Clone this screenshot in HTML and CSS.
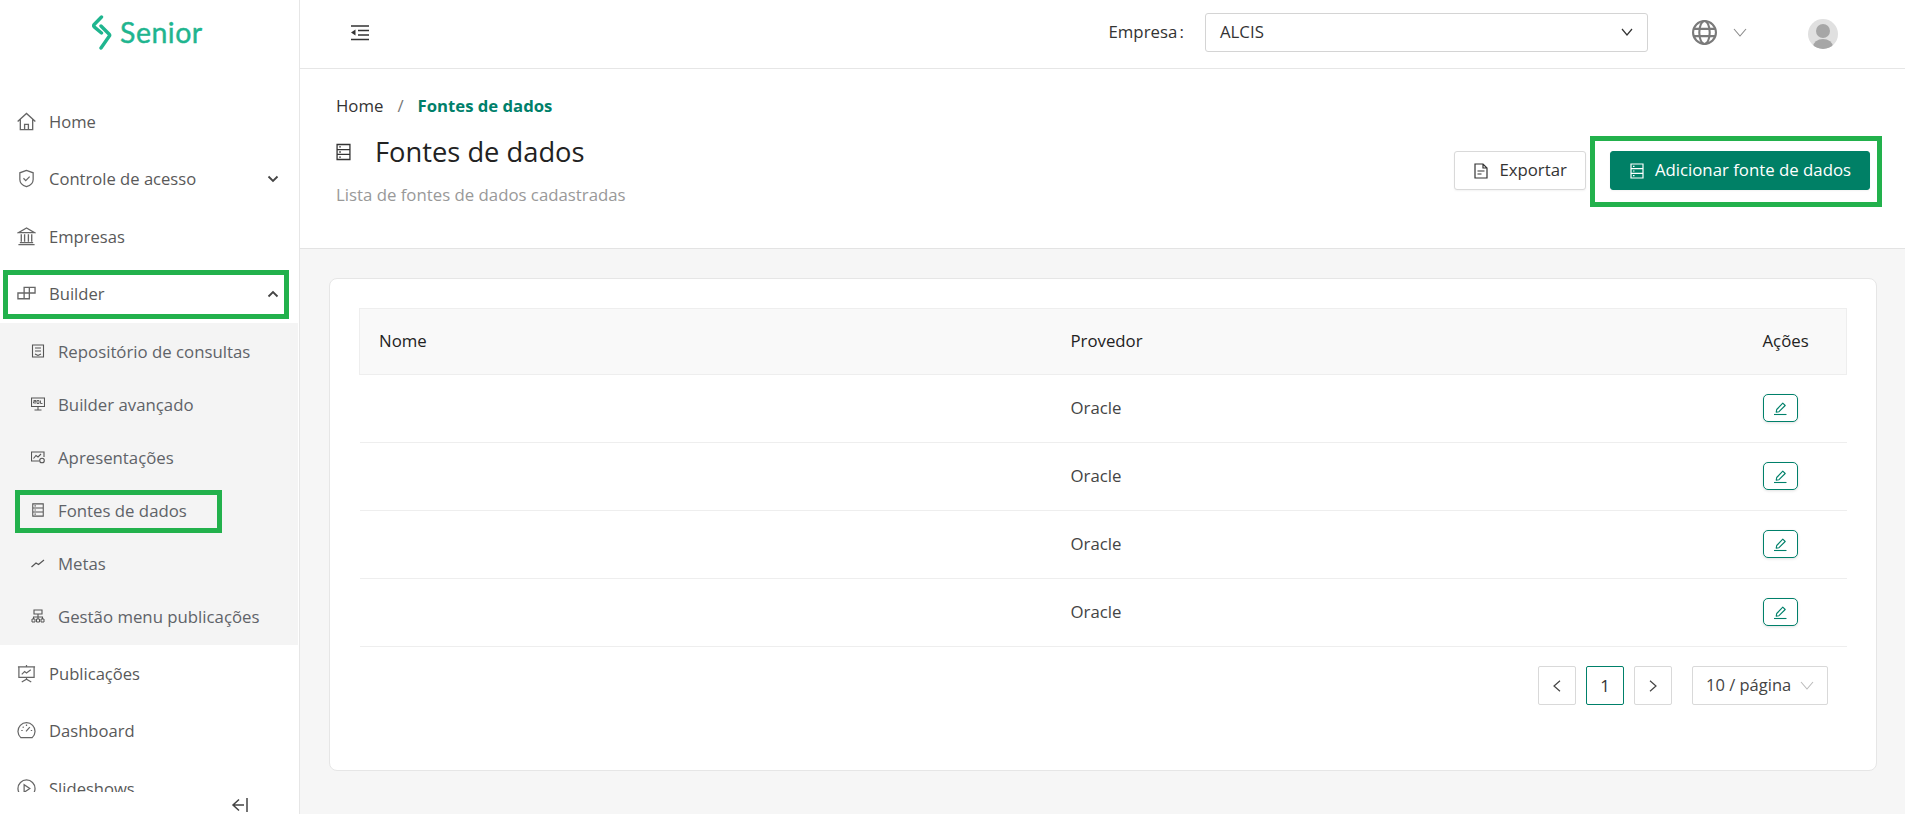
FILE: index.html
```html
<!DOCTYPE html>
<html lang="pt-BR">
<head>
<meta charset="utf-8">
<title>Fontes de dados</title>
<link rel="stylesheet" href="styles.css">
</head>
<body>
<svg class="sprite" aria-hidden="true">
  <symbol id="i-server" viewBox="0 0 14 16"><path d="M1 1h12v14H1zM1 5.700h12M1 10.300h12" fill="none" stroke="currentColor" stroke-width="1.200"/><path d="M3 3.300h1.500M3 8h1.500M3 12.700h1.500" stroke="currentColor" stroke-width="1.200"/></symbol>
  <symbol id="i-edit" viewBox="0 0 16 16"><path d="M2 14.500h12.500" fill="none" stroke="currentColor" stroke-width="1.100"/><path d="M4.200 12.200l.5-2.700L10.800 3.200l2.400 2.300-6.200 6.200z" fill="none" stroke="currentColor" stroke-width="1.100" stroke-linejoin="round"/></symbol>
</svg>

<div class="app">
  <aside class="sidebar">
    <div class="logo">
      <svg class="logo-mark" viewBox="0 0 20 35"><path d="M9.500 2 2.200 9.500c-.8.800-.8 1.600 0 2.400L9.500 18" fill="none" stroke="#1fb58f" stroke-width="3.400" stroke-linecap="round" stroke-linejoin="round"/><path d="M9 11l8 8c.8.800.8 1.800 0 2.600L9 33" fill="none" stroke="#1fb58f" stroke-width="3.400" stroke-linecap="round" stroke-linejoin="round"/></svg>
      <span class="logo-text">Senior</span>
    </div>
    <nav class="nav">
      <a class="nav-item"><svg class="nav-icon" viewBox="0 0 20 20"><path d="M.7 10 10 1.500 19.300 10M3.500 8v10.500h13V8M8 18.500v-5.500h4v5.500" fill="none" stroke="currentColor" stroke-width="1.400"/></svg>Home</a>
      <a class="nav-item"><svg class="nav-icon" viewBox="0 0 20 20"><path d="M10 1.500 3 4v7c0 4 3.500 6.500 7 7.500 3.500-1 7-3.500 7-7.500V4z" fill="none" stroke="currentColor" stroke-width="1.300"/><path d="M6.800 9.800 9.200 12.200 13.300 8" fill="none" stroke="currentColor" stroke-width="1.300"/></svg>Controle de acesso<svg class="caret" viewBox="0 0 12 8"><path d="M1.500 1.500 6 6l4.500-4.500" fill="none" stroke="currentColor" stroke-width="1.800"/></svg></a>
      <a class="nav-item"><svg class="nav-icon" viewBox="0 0 20 20"><path d="M10 1 1.500 6h17zM1.500 18.500h17M3 16.500h14M4.500 7.500v8M8 7.500v8M12 7.500v8M15.500 7.500v8" fill="none" stroke="currentColor" stroke-width="1.400"/></svg>Empresas</a>
      <a class="nav-item"><svg class="nav-icon" viewBox="0 0 20 20"><path d="M1 9.500h6.500v6H1zM7.500 9.500H13v6H7.500zM7.500 3.500H13v6H7.500zM13 3.500h6v6h-6" fill="none" stroke="currentColor" stroke-width="1.400"/></svg>Builder<svg class="caret" viewBox="0 0 12 8"><path d="M1.500 6.500 6 2l4.500 4.500" fill="none" stroke="currentColor" stroke-width="1.800"/></svg></a>
      <div class="subnav">
        <a class="sub-item"><svg class="sub-icon" viewBox="0 0 14 14"><path d="M1.500 1h11v12h-11zM4 4h6M4 7h6M4 10l3 1.500 3-1.500" fill="none" stroke="currentColor" stroke-width="1.100"/></svg>Repositório de consultas</a>
        <a class="sub-item"><svg class="sub-icon" viewBox="0 0 14 14"><path d="M.5 1h13v8.500H.5zM7 9.500V13M3.500 13h7" fill="none" stroke="currentColor" stroke-width="1.100"/><path d="M2.500 3.500h2.500v1.200H2.500v1.300h2.500M6 3.500h2v3H6zM9.500 3.500v3h2" fill="none" stroke="currentColor" stroke-width=".9"/></svg>Builder avançado</a>
        <a class="sub-item"><svg class="sub-icon" viewBox="0 0 14 14"><path d="M8 11H.5V2h12.500v5" fill="none" stroke="currentColor" stroke-width="1.100"/><path d="M2.500 8.500 5 5.500l2 1.500 3-3" fill="none" stroke="currentColor" stroke-width="1.100"/><circle cx="11" cy="10.500" r="2.300" fill="none" stroke="currentColor" stroke-width="1.100"/></svg>Apresentações</a>
        <a class="sub-item"><svg class="sub-icon"><use href="#i-server"/></svg>Fontes de dados</a>
        <a class="sub-item"><svg class="sub-icon" viewBox="0 0 14 14"><path d="M.5 11 5 7l2.500 1.500L13 4" fill="none" stroke="currentColor" stroke-width="1.200"/></svg>Metas</a>
        <a class="sub-item"><svg class="sub-icon" viewBox="0 0 14 14"><path d="M3 1h8v4H3zM7 5v3M2.500 10V8h9v2M7 8v2" fill="none" stroke="currentColor" stroke-width="1.100"/><path d="M1 10h3v3H1zM5.500 10h3v3h-3zM10 10h3v3h-3z" fill="none" stroke="currentColor" stroke-width="1"/></svg>Gestão menu publicações</a>
      </div>
      <a class="nav-item"><svg class="nav-icon" viewBox="0 0 20 20"><path d="M1 3h18M2 3v11h16V3M10 1v2M10 14v2M5 19l5-3 5 3" fill="none" stroke="currentColor" stroke-width="1.300"/><path d="M5 11l3-3 2 1.500L14.500 6" fill="none" stroke="currentColor" stroke-width="1.200"/></svg>Publicações</a>
      <a class="nav-item"><svg class="nav-icon" viewBox="0 0 20 20"><path d="M4 17.500a9 9 0 1 1 12 0z" fill="none" stroke="currentColor" stroke-width="1.300"/><path d="M9.500 11 13.500 6.500M4.500 10h1.500M6 6l1 1M10 3.800v1.500M14.500 10H16" fill="none" stroke="currentColor" stroke-width="1.300"/></svg>Dashboard</a>
      <a class="nav-item"><svg class="nav-icon" viewBox="0 0 20 20"><circle cx="10" cy="10" r="9" fill="none" stroke="currentColor" stroke-width="1.300"/><path d="M7.500 6v8l6-4z" fill="none" stroke="currentColor" stroke-width="1.300"/></svg>Slideshows</a>
    </nav>
    <div class="collapse">
      <svg class="collapse-icon" viewBox="0 0 18 14"><path d="M8 1.500 2 7l6 5.500M2 7h11M16 0v14" fill="none" stroke="#444" stroke-width="1.500"/></svg>
    </div>
  </aside>

  <div class="main">
    <header class="topbar">
      <svg class="menu-toggle" viewBox="0 0 18 16"><path d="M0 1h18M7 5.500h11M7 10h11M0 14.500h18" fill="none" stroke="#333" stroke-width="1.300"/><path d="M4.500 4.500v6L0 7.500z" fill="#333"/></svg>
      <span class="company-label">Empresa :</span>
      <div class="company-select"><span>ALCIS</span><svg class="chev" viewBox="0 0 12 8"><path d="M1 1l5 6 5-6" fill="none" stroke="#333" stroke-width="1.200"/></svg></div>
      <svg class="globe" viewBox="0 0 24 24"><circle cx="12" cy="12" r="11" fill="none" stroke="#7a7a7a" stroke-width="2"/><ellipse cx="12" cy="12" rx="5" ry="11" fill="none" stroke="#7a7a7a" stroke-width="2"/><path d="M1.500 8.500h21M1.500 15.500h21" stroke="#7a7a7a" stroke-width="2"/></svg>
      <svg class="globe-chev" viewBox="0 0 14 9"><path d="M1 1l6 7 6-7" fill="none" stroke="#8a8a8a" stroke-width="1.100"/></svg>
      <div class="avatar"><span class="avatar-head"></span><span class="avatar-body"></span></div>
    </header>

    <section class="page-head">
      <div class="page-title-col">
        <div class="breadcrumb"><span>Home</span><span class="crumb-sep">/</span><strong>Fontes de dados</strong></div>
        <h1 class="title"><svg class="title-icon"><use href="#i-server"/></svg>Fontes de dados</h1>
        <p class="subtitle">Lista de fontes de dados cadastradas</p>
      </div>
      <div class="actions">
        <button class="btn"><svg class="btn-icon" viewBox="0 0 14 16"><path d="M1 1h8l4 4v10H1zM9 1v4h4" fill="none" stroke="#333" stroke-width="1.200"/><path d="M3.500 8h7M3.500 11h4" stroke="#333" stroke-width="1.200"/></svg>Exportar</button>
        <button class="btn btn-primary"><svg class="btn-icon"><use href="#i-server"/></svg>Adicionar fonte de dados</button>
      </div>
    </section>

    <section class="content">
      <div class="card">
        <table class="table">
          <thead>
            <tr><th class="col-name">Nome</th><th class="col-prov">Provedor</th><th class="col-act">Ações</th></tr>
          </thead>
          <tbody>
            <tr><td></td><td>Oracle</td><td><button class="edit"><svg class="edit-icon"><use href="#i-edit"/></svg></button></td></tr>
            <tr><td></td><td>Oracle</td><td><button class="edit"><svg class="edit-icon"><use href="#i-edit"/></svg></button></td></tr>
            <tr><td></td><td>Oracle</td><td><button class="edit"><svg class="edit-icon"><use href="#i-edit"/></svg></button></td></tr>
            <tr><td></td><td>Oracle</td><td><button class="edit"><svg class="edit-icon"><use href="#i-edit"/></svg></button></td></tr>
          </tbody>
        </table>
        <div class="pagination">
          <button class="page-btn"><svg class="page-arrow" viewBox="0 0 8 12"><path d="M7 .8 1 6l6 5.200" fill="none" stroke="#444" stroke-width="1.200"/></svg></button>
          <button class="page-btn page-current">1</button>
          <button class="page-btn"><svg class="page-arrow" viewBox="0 0 8 12"><path d="M1 .8 7 6l-6 5.200" fill="none" stroke="#444" stroke-width="1.200"/></svg></button>
          <div class="page-size"><span>10 / página</span><svg class="size-chev" viewBox="0 0 14 9"><path d="M1 1l6 7 6-7" fill="none" stroke="#bbb" stroke-width="1.100"/></svg></div>
        </div>
      </div>
    </section>
  </div>

  <div class="mark mark-builder"></div>
  <div class="mark mark-fontes"></div>
  <div class="mark mark-add"></div>
</div>
</body>
</html>
```

FILE: styles.css
```css
* { box-sizing: border-box; }
html, body { margin: 0; padding: 0; background: #fff; overflow: hidden; }
body { font-family: "Open Sans", "Liberation Sans", sans-serif; font-size: 16.8px; color: #333; }
.sprite { position: absolute; width: 0; height: 0; }

.app { position: relative; display: flex; width: 1905px; height: 814px; }

/* Sidebar */
.sidebar { width: 300px; flex: none; height: 814px; border-right: 1px solid #e6e6e6; display: flex; flex-direction: column; background: #fff; }
.logo { height: 93px; flex: none; display: flex; align-items: flex-start; padding: 15px 0 0 92px; gap: 8px; }
.logo-mark { width: 20px; height: 35px; }
.logo-text { font-family: "Lato", sans-serif; font-size: 28.5px; line-height: 34px; color: #1fb58f; letter-spacing: .5px; -webkit-text-stroke: .4px #1fb58f; }
.nav { flex: 1; min-height: 0; overflow: hidden; }
.nav-item { display: flex; align-items: center; height: 57.5px; padding: 0 20px 1px 17px; color: #595959; font-size: 16.6px; position: relative; }
.nav-icon { width: 19px; height: 19px; margin-right: 13px; flex: none; color: #666; }
.caret { width: 12px; height: 8px; margin-left: auto; color: #444; }
.subnav { background: #f4f4f4; width: 298px; padding: 2px 0; }
.sub-item { display: flex; align-items: center; height: 53px; padding: 0 0 1px 31px; color: #5f6368; }
.sub-icon { width: 14px; height: 14px; margin-right: 13px; flex: none; color: #555; }
.collapse { height: 22px; flex: none; display: flex; justify-content: flex-end; align-items: flex-start; padding: 6px 50px 0 0; }
.collapse-icon { width: 18px; height: 14px; }

/* Main */
.main { flex: 1; min-width: 0; display: flex; flex-direction: column; background: #f6f6f6; }
.topbar { height: 69px; flex: none; background: #fff; border-bottom: 1px solid #e6e6e6; display: flex; align-items: center; padding: 0 0 3px 51px; }
.menu-toggle { width: 18px; height: 16px; }
.company-label { margin: 0 0 2px auto; color: #333; word-spacing: -2px; }
.company-select { width: 443px; height: 39px; margin-left: 21px; border: 1px solid #d4d4d4; border-radius: 3px; display: flex; align-items: center; justify-content: space-between; padding: 0 14px 2px; color: #333; }
.chev { width: 12px; height: 8px; }
.globe { width: 25px; height: 25px; margin-left: 44px; }
.globe-chev { width: 14px; height: 9px; margin-left: 16px; }
.avatar { width: 30px; height: 30px; border-radius: 50%; background: #e0e0e0; margin: 3px 67px 0 61px; position: relative; overflow: hidden; }
.avatar-head { position: absolute; left: 8px; top: 5px; width: 14px; height: 14px; border-radius: 50%; background: #a6a6a6; }
.avatar-body { position: absolute; left: 5px; top: 20px; width: 20px; height: 16px; border-radius: 50%; background: #a6a6a6; }

.page-head { height: 180px; flex: none; background: #fff; border-bottom: 1px solid #e3e3e3; display: flex; justify-content: space-between; padding: 0 35px 0 36px; }
.breadcrumb { margin-top: 26px; line-height: 22px; color: #333; display: flex; }
.crumb-sep { margin: 0 14px; color: #777; }
.breadcrumb strong { color: #00806a; font-weight: 700; font-size: 16.7px; }
.title { margin: 17px 0 0; display: flex; align-items: center; font-size: 27.3px; line-height: 36px; font-weight: 400; color: #222; }
.title-icon { width: 15px; height: 18px; margin-right: 24px; color: #333; }
.subtitle { margin: 14px 0 0; line-height: 22px; color: #999; }
.actions { display: flex; gap: 24px; padding-top: 82px; align-items: flex-start; }
.btn { height: 39px; padding: 0 18px 2px 19px; border: 1px solid #d9d9d9; border-radius: 3px; background: #fff; font: inherit; color: #333; display: flex; align-items: center; box-shadow: 0 1px 2px rgba(0,0,0,.05); }
.btn-icon { width: 14px; height: 16px; margin: 2px 11px 0 0; color: #fff; }
.btn-primary { background: #008066; border-color: #008066; color: #fff; }

.content { flex: 1; padding: 29px 28px 43px 29px; }
.card { height: 493px; background: #fff; border: 1px solid #e6e6e6; border-radius: 8px; padding: 29px 29px 0; }
.table { width: 1488px; border-collapse: collapse; table-layout: fixed; }
.table th { height: 66px; padding: 0 20px 2px; background: #f9f9f9; border: 1px solid #eee; border-width: 1px 0; font-weight: 400; color: #222; text-align: left; }
.table th:first-child { border-left: 1px solid #eee; padding-left: 19px; }
.table th:last-child { border-right: 1px solid #eee; }
.col-name { width: 691px; }
.col-act { width: 104px; }
.table td { height: 68px; padding: 0 20px 2px; border-bottom: 1px solid #eee; color: #444; }
.edit { width: 35px; height: 28px; padding: 0; border: 1px solid #00806a; border-radius: 5px; background: #fff; display: flex; align-items: center; justify-content: center; box-shadow: 0 1px 3px rgba(0,0,0,.12); }
.edit-icon { width: 16px; height: 16px; color: #00806a; }

.pagination { display: flex; justify-content: flex-end; align-items: center; margin-top: 19px; padding-right: 19px; gap: 10px; }
.page-btn { width: 38px; height: 39px; padding: 0; border: 1px solid #d9d9d9; border-radius: 2px; background: #fff; font: inherit; color: #333; display: flex; align-items: center; justify-content: center; }
.page-current { border-color: #00806a; }
.page-arrow { width: 8px; height: 12px; }
.page-size { width: 136px; height: 39px; margin-left: 10px; border: 1px solid #d9d9d9; border-radius: 2px; display: flex; align-items: center; justify-content: space-between; padding: 0 13px 2px; color: #444; font-size: 16.5px; }
.size-chev { width: 14px; height: 9px; margin-top: 2px; }

/* Annotation rectangles drawn over the screenshot */
.mark { position: absolute; border: 5px solid #22b14c; pointer-events: none; }
.mark-builder { left: 3px; top: 270px; width: 286px; height: 49px; }
.mark-fontes { left: 15px; top: 490px; width: 207px; height: 43px; }
.mark-add { left: 1590px; top: 136px; width: 292px; height: 71px; }
```
